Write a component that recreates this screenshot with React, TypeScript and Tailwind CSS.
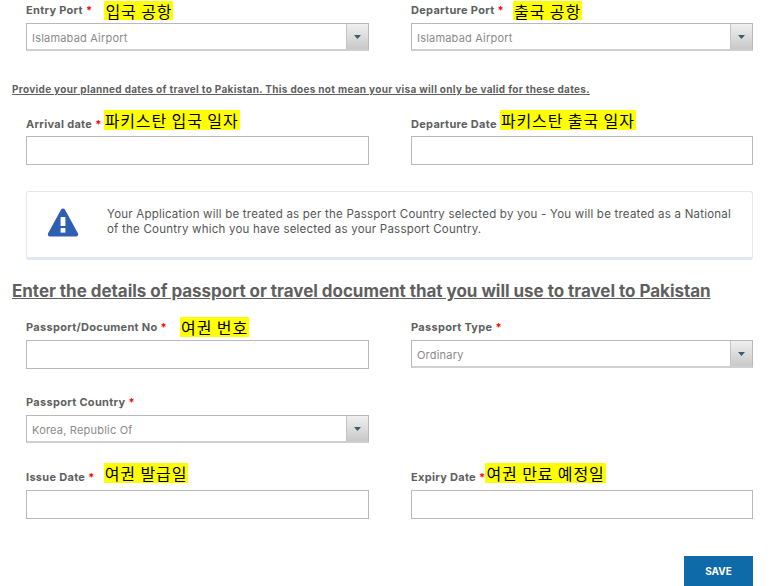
const FONT = "font-['Inter','Noto_Sans_CJK_KR',sans-serif]";

type LabelProps = {
  text: string;
  required?: boolean;
  ko?: string;
  koClass?: string;
  rowClass?: string;
  textClass?: string;
};

function Label({ text, required = true, ko, koClass = '', rowClass = 'h-5 mb-[3px]', textClass = '' }: LabelProps) {
  return (
    <div className={`flex items-center ${rowClass}`}>
      <span className={`text-[11px] font-bold text-[#5f5f5f] tracking-[0.3px] whitespace-nowrap ${textClass}`}>
        {text}
        {required && <span className="ml-[3px] text-[#f00]">*</span>}
      </span>
      {ko && (
        <span className={`bg-[#ffff00] h-full leading-[20px] px-px text-[16px] font-normal text-black tracking-[0.9px] whitespace-nowrap font-['Noto_Sans_CJK_KR',sans-serif] ${koClass}`}>
          {ko}
        </span>
      )}
    </div>
  );
}

function TextInput() {
  return <div className="h-[29px] border border-[#b9b9b9] bg-white" />;
}

function SelectBox({ value }: { value: string }) {
  return (
    <div className="flex h-[28px] border border-[#b9b9b9] border-b-2 border-b-[#d0d0d0] bg-white">
      <div className="flex-1 pl-[5px] text-[11px] leading-[29px] tracking-[0.2px] text-[#8a8a8a]">{value}</div>
      <div className="flex w-[22px] items-center justify-center border-l border-[#c4c4c4] bg-gradient-to-b from-[#f0f0f0] to-[#c9c9c9]">
        <svg width="7" height="4" viewBox="0 0 7 4">
          <path d="M0 0h7L3.5 4z" fill="#3d5a72" />
        </svg>
      </div>
    </div>
  );
}

const ROW = 'grid grid-cols-[343px_342px] gap-x-[42px] pl-[26px]';

export default function App() {
  return (
    <div className={`h-[586px] w-[778px] overflow-hidden bg-white ${FONT}`}>
      <div className={ROW}>
        <div>
          <Label text="Entry Port" ko="입국 공항" koClass="ml-[12px]" rowClass="h-5 pt-px mb-[3px]" />
          <SelectBox value="Islamabad Airport" />
        </div>
        <div>
          <Label text="Departure Port" ko="출국 공항" koClass="ml-[9px]" rowClass="h-5 pt-px mb-[3px]" />
          <SelectBox value="Islamabad Airport" />
        </div>
      </div>

      <p className="ml-3 mt-[32px] text-[10px] leading-[12px] font-bold tracking-[0.31px] text-[#5f5f5f] underline whitespace-nowrap">
        Provide your planned dates of travel to Pakistan. This does not mean your visa will only be valid for these dates.
      </p>

      <div className={`mt-[15px] ${ROW}`}>
        <div>
          <Label text="Arrival date" ko="파키스탄 입국 일자" koClass="ml-[2px]" rowClass="h-5 mb-[6px]" textClass="mt-2" />
          <TextInput />
        </div>
        <div>
          <Label text="Departure Date" required={false} ko="파키스탄 출국 일자" koClass="ml-[3px]" rowClass="h-5 mb-[6px]" textClass="mt-2" />
          <TextInput />
        </div>
      </div>

      <div className="ml-[26px] mr-[25px] mt-[26px] flex h-[69px] items-center rounded-[3px] border border-[#e6e8eb] border-b-[3px] border-b-[#dfe7f0] bg-white pb-[5px]">
        <svg className="ml-[20px] shrink-0" width="32" height="30" viewBox="0 0 32 30">
          <path d="M16 1.5c.8 0 1.5.4 1.9 1.1l13 23.6c.8 1.5-.2 3.3-1.9 3.3H3c-1.7 0-2.7-1.8-1.9-3.3l13-23.6c.4-.7 1.1-1.1 1.9-1.1z" fill="#2f5fb3" />
          <rect x="13.6" y="10" width="4.8" height="9" fill="#fff" />
          <rect x="13.6" y="21" width="4.8" height="4.6" fill="#fff" />
        </svg>
        <p className="ml-[28px] text-[11.5px] leading-[15px] tracking-[0.22px] text-[#555] whitespace-nowrap">
          Your Application will be treated as per the Passport Country selected by you - You will be treated as a National
          <br />
          of the Country which you have selected as your Passport Country.
        </p>
      </div>

      <h2 className="ml-3 mt-[20px] text-[17px] leading-[22px] font-bold tracking-[-0.03px] text-[#5f5f5f] underline whitespace-nowrap">
        Enter the details of passport or travel document that you will use to travel to Pakistan
      </h2>

      <div className={`mt-[15px] ${ROW}`}>
        <div>
          <Label text="Passport/Document No" ko="여권 번호" koClass="ml-[13px]" />
          <TextInput />
        </div>
        <div>
          <Label text="Passport Type" />
          <SelectBox value="Ordinary" />
        </div>
      </div>

      <div className={`mt-[23px] ${ROW}`}>
        <div>
          <Label text="Passport Country" />
          <SelectBox value="Korea, Republic Of" />
        </div>
      </div>

      <div className={`mt-[20px] ${ROW}`}>
        <div>
          <Label text="Issue Date" ko="여권 발급일" koClass="ml-[9px]" rowClass="h-5 mb-[7px]" textClass="mt-2" />
          <TextInput />
        </div>
        <div>
          <Label text="Expiry Date" ko="여권 만료 예정일" rowClass="h-5 mb-[7px]" textClass="mt-2" />
          <TextInput />
        </div>
      </div>

      <div className="mt-[37px] flex justify-end pr-[25px]">
        <button className="h-[30px] w-[69px] bg-[#0e6aa8] text-[10px] font-bold text-white">SAVE</button>
      </div>
    </div>
  );
}
